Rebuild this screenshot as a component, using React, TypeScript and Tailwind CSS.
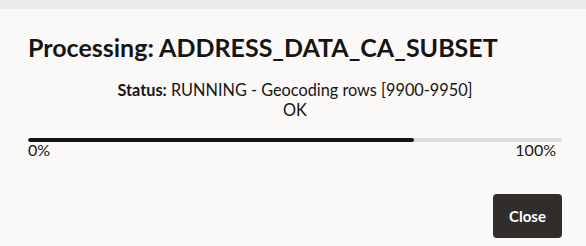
export default function App() {
  const progress = 72.3;

  return (
    <div
      className="w-[586px] h-[246px] bg-[#fbf9f8] text-[#161513] overflow-hidden flex flex-col"
      style={{ fontFamily: 'Lato, "Noto Sans", sans-serif' }}
    >
      <div className="h-[9px] bg-[#ebeae8]" />

      <div className="pl-[28px] pr-[24px] flex flex-col">
        <h1 className="mt-[23px] text-[25px] leading-[30px] font-bold">
          Processing: ADDRESS_DATA_CA_SUBSET
        </h1>

        <div className="mt-[18px] text-center text-[16.3px] leading-[20px]">
          <div>
            <span className="font-bold">Status:</span> RUNNING - Geocoding rows [9900-9950]
          </div>
          <div>OK</div>
        </div>

        <div className="mt-[18px] h-[4px] rounded-full bg-[#dedcda] overflow-hidden">
          <div className="h-full bg-[#161513] rounded-full" style={{ width: `${progress}%` }} />
        </div>
        <div className="flex justify-between pr-[6px] text-[16px] leading-[16px]">
          <span>0%</span>
          <span>100%</span>
        </div>

        <div className="flex justify-end mt-[36px]">
          <button className="w-[69px] h-[44px] rounded-[4px] bg-[#312d2a] text-white text-[15px] font-bold">
            Close
          </button>
        </div>
      </div>
    </div>
  );
}
